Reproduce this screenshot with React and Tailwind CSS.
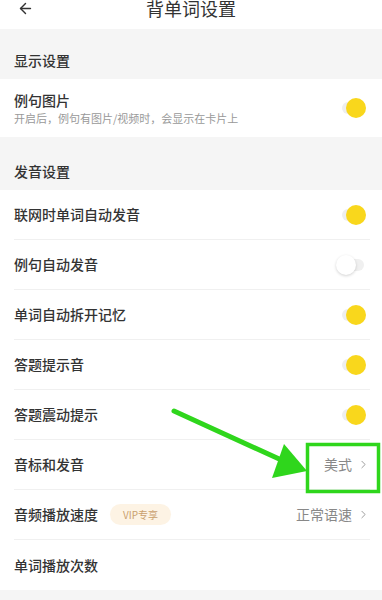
import { ChevronRight, ArrowLeft } from 'lucide-react';

const font = { fontFamily: '"Noto Sans CJK SC", "Noto Sans", sans-serif' };

function Toggle({ on }) {
  return (
    <div className="relative w-[34px] h-[20px] flex items-center">
      <div className={`ml-[6px] h-[12px] rounded-full ${on ? 'w-[22px] bg-[#eeeeee]' : 'w-[22px] bg-[#f0f0f0]'}`} />
      {on ? (
        <div className="absolute right-[4px] w-[20px] h-[20px] rounded-full bg-[#f9d71c]" />
      ) : (
        <div className="absolute left-[0px] w-[20px] h-[20px] rounded-full bg-white shadow-[0_1px_3px_rgba(0,0,0,0.18)]" />
      )}
    </div>
  );
}

function Section({ title, h }) {
  return (
    <div className={`bg-[#f5f5f5] ${h} flex items-end px-[14px] pb-[8px]`}>
      <span className="text-[14px] font-medium text-[#333]">{title}</span>
    </div>
  );
}

function Row({ label, right, last, children }) {
  return (
    <div className="px-[14px] pr-[12px]">
      <div className={`h-[50px] flex items-center justify-between ${last ? '' : 'border-b border-[#f0f0f0]'}`}>
        <div className="flex items-center gap-[12px]">
          <span className="text-[14px] font-medium text-[#333]">{label}</span>
          {children}
        </div>
        {right}
      </div>
    </div>
  );
}

function Value({ text }) {
  return (
    <div className="flex items-center gap-[5px] text-[#888]">
      <span className="text-[14px]">{text}</span>
      <ChevronRight size={13} strokeWidth={1.5} />
    </div>
  );
}

export default function App() {
  return (
    <div className="relative w-[382px] h-[600px] overflow-hidden bg-white" style={font}>
      <div className="h-[29px] flex items-center px-[17px] pb-[13px] relative">
        <ArrowLeft size={17} strokeWidth={2} className="text-[#333]" />
        <span className="absolute left-0 right-0 text-center text-[18px] leading-[22px] text-[#333] top-[-3px]">背单词设置</span>
      </div>

      <Section title="显示设置" h="h-[50px]" />
      <div className="px-[14px] pr-[12px] h-[58px] flex items-center justify-between">
        <div className="flex flex-col">
          <span className="text-[14px] font-medium text-[#333] leading-[20px]">例句图片</span>
          <span className="text-[11px] text-[#999] leading-[16px]">开启后，例句有图片/视频时，会显示在卡片上</span>
        </div>
        <Toggle on />
      </div>

      <Section title="发音设置" h="h-[53px]" />
      <Row label="联网时单词自动发音" right={<Toggle on />} />
      <Row label="例句自动发音" right={<Toggle on={false} />} />
      <Row label="单词自动拆开记忆" right={<Toggle on />} />
      <Row label="答题提示音" right={<Toggle on />} />
      <Row label="答题震动提示" right={<Toggle on />} />
      <Row label="音标和发音" right={<Value text="美式" />} />
      <Row label="音频播放速度" right={<Value text="正常语速" />}>
        <span className="px-[13px] h-[21px] flex items-center rounded-full bg-[#fdf3e4] text-[10px] text-[#c9a06d]">VIP专享</span>
      </Row>
      <Row label="单词播放次数" last />
      <div className="bg-[#f5f5f5] h-[20px]" />

      <svg className="absolute left-0 top-0 pointer-events-none" width="382" height="600" viewBox="0 0 382 600">
        <line x1="174" y1="411" x2="288" y2="463" stroke="#2fd61c" strokeWidth="5" strokeLinecap="round" />
        <polygon points="307,471 284,444 272,478" fill="#2fd61c" />
        <rect x="307.5" y="444.5" width="71" height="47" fill="none" stroke="#2fd61c" strokeWidth="3.5" />
      </svg>
    </div>
  );
}
